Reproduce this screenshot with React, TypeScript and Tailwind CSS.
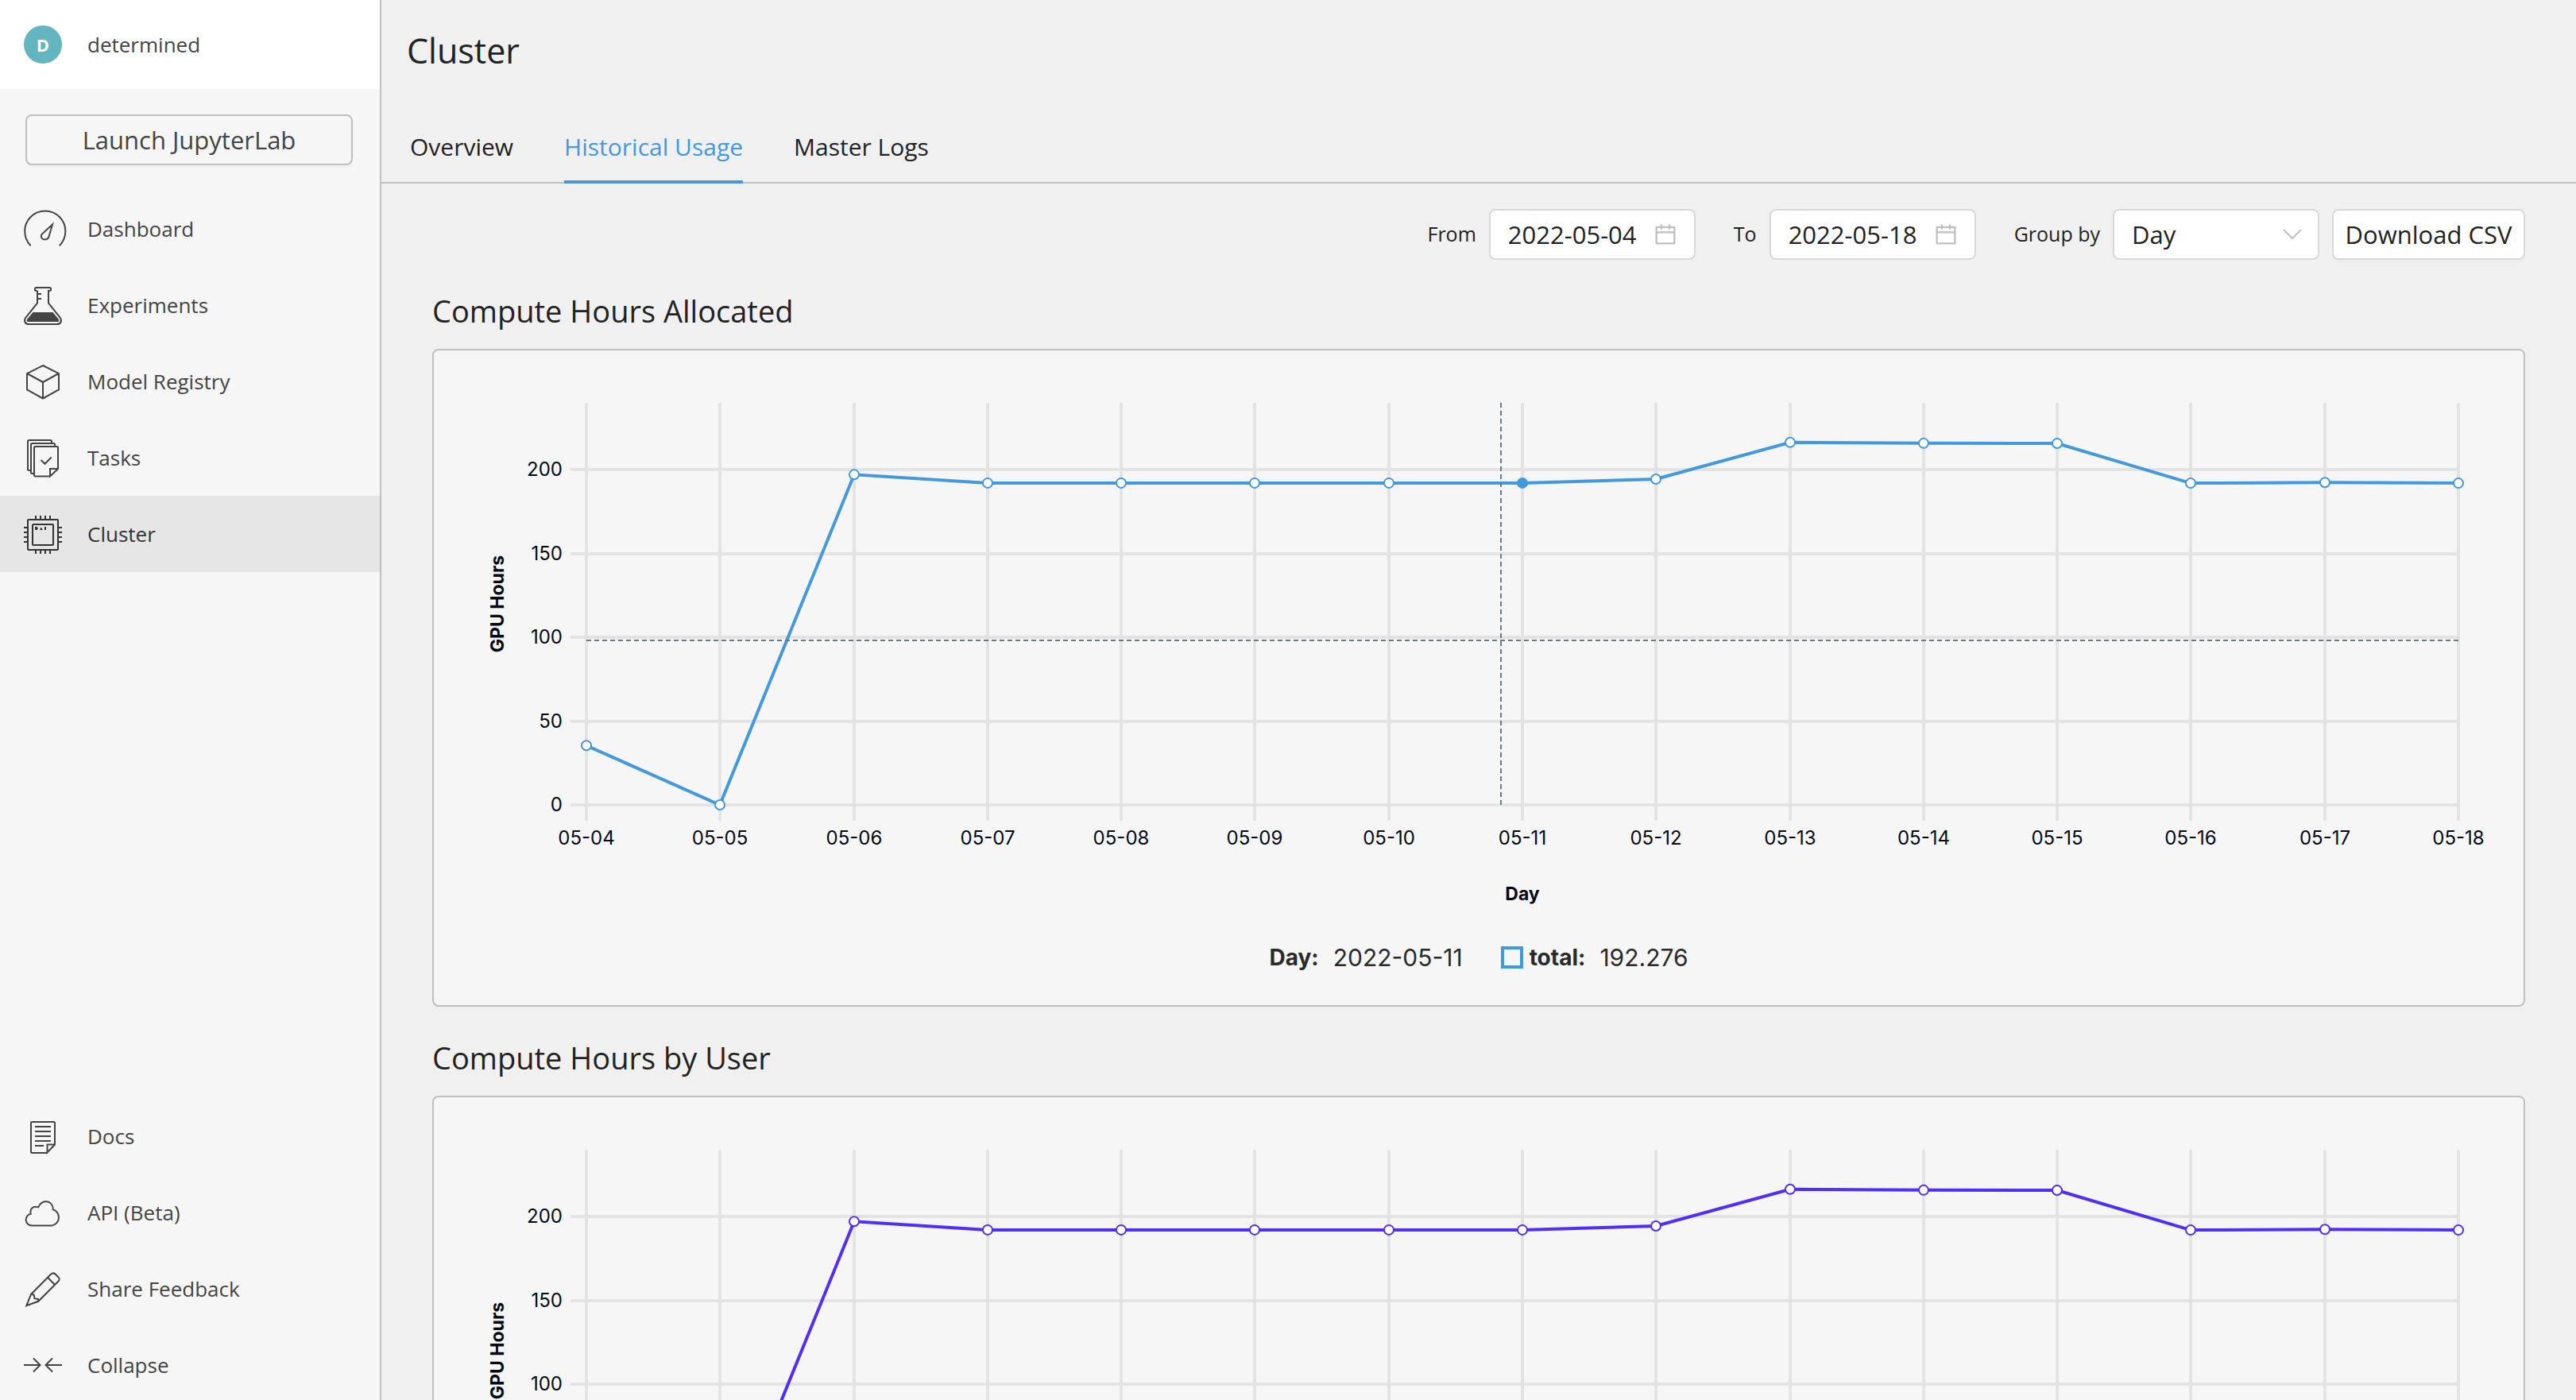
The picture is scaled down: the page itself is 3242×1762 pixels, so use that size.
import { useLayoutEffect, useRef, useState } from "react";
import type { ReactNode } from "react";
import { AiOutlineCalendar } from "react-icons/ai";

function Icon({ children }: { children: ReactNode }) {
  return (
    <svg
      viewBox="0 0 48 48"
      className="size-12 shrink-0 overflow-visible"
      fill="none"
      stroke="currentColor"
      strokeWidth="2"
      aria-hidden="true"
    >
      {children}
    </svg>
  );
}

const DashboardIcon = () => (
  <Icon>
    <path d="M8.7 45.2A25.6 25.6 0 1 1 44.8 45.2" />
    <path d="M36 18.500 22.600 30.800C20.600 34 22.600 37.400 26.400 37.400C29.600 37.400 31.400 35.600 32 32Z" />
  </Icon>
);

const ExperimentsIcon = () => (
  <Icon>
    <path d="M17 6h-1.500a1.500 1.500 0 0 1-1.500-1.500V3.500a1.500 1.500 0 0 1 1.500-1.500h17a1.500 1.500 0 0 1 1.500 1.500v1a1.500 1.500 0 0 1-1.500 1.500H31V21.500L45.500 39.500C48.500 43.500 46.500 48 42 48H6C1.500 48-.5 43.500 2.500 39.500L17 21.500V6M17 10h5M17 16h5" />
    <path
      d="M11.500 33h25L43.600 41.500C45 43.500 44 45 42 45H6C4 45 3 43.500 4.400 41.500Z"
      fill="currentColor"
      stroke="none"
    />
  </Icon>
);

const ModelIcon = () => (
  <Icon>
    <path d="M24 4 44 14V34.500L24 45.500 4 34.500V14ZM4 14 24 25 44 14M24 25V45.500" />
  </Icon>
);

const TasksIcon = () => (
  <Icon>
    <path d="M8 40H6.500A1.500 1.500 0 0 1 5 38.500V3.500A1.500 1.500 0 0 1 6.500 2H33.500A1.500 1.500 0 0 1 35 3.500V6" />
    <path d="M12 44H10.500A1.500 1.500 0 0 1 9 42.500V7.500A1.500 1.500 0 0 1 10.500 6H37.500A1.500 1.500 0 0 1 39 7.500V10" />
    <path d="M33 47.500H14.500A1.500 1.500 0 0 1 13 46V11.500A1.500 1.500 0 0 1 14.500 10H41.500A1.500 1.500 0 0 1 43 11.500V38L33 47.500V38H43" />
    <path d="M21.500 27 26.500 31.800 34.700 23.500" />
  </Icon>
);

const ClusterIcon = () => (
  <Icon>
    <rect x="5" y="6" width="38" height="38" rx="1" />
    <rect x="11" y="12" width="26" height="26" rx="1" />
    <path d="M15 1v5M21 1v5M27 1v5M33 1v5M15 44v5M21 44v5M27 44v5M33 44v5M0 16h5M0 22h5M0 28h5M0 34h5M43 16h5M43 22h5M43 28h5M43 34h5" />
    <path
      d="M14 15h2.500L18 17 16.500 19H14ZM21.500 15.500 24 19H20ZM26 15h2v4h-2Z"
      fill="currentColor"
      stroke="none"
    />
  </Icon>
);

const DocsIcon = () => (
  <Icon>
    <path d="M30 45H10.500A1.500 1.500 0 0 1 9 43.500V7.500A1.500 1.500 0 0 1 10.500 6H37.500A1.500 1.500 0 0 1 39 7.500V34.500L29.500 44.500V34.500H39" />
    <path d="M14 12h20M14 18h20M14 24h20M14 30h20M14 36h11" />
  </Icon>
);

const ApiIcon = () => (
  <Icon>
    <path d="M10 40.500A7.400 7.400 0 0 1 8.800 25.800C7 19.500 12 15 18.300 17.300C22 6.500 37 8.500 36.800 20.300A10.400 10.400 0 0 1 35 40.500Z" />
  </Icon>
);

const FeedbackIcon = () => (
  <Icon>
    <path d="M9 31 34 5.800C36 4 38 4 39.500 5.500L43.500 9.500C45 11 45 13 43.300 14.700L18.300 39.800 3.300 45.300Z" />
    <path d="M30.300 10 38.800 18.700M9 31l3.600.5.900 4.700 4.500.8.300 2.800" />
  </Icon>
);

const CollapseIcon = () => (
  <Icon>
    <path d="M0 24H20.500M12 15.500 20.500 24 12 32.500M48 24H27.500M36 15.500 27.500 24 36 32.500" />
  </Icon>
);

function NavItem({ icon, label, active }: { icon: ReactNode; label: string; active?: boolean }) {
  return (
    <a
      href="#"
      aria-current={active ? "page" : undefined}
      className={
        active
          ? "flex h-24 items-center gap-8 bg-[#e6e6e6] pl-[30px] text-[26px] text-[#333333]"
          : "flex h-24 items-center gap-8 pl-[30px] text-[26px] text-[#444444]"
      }
    >
      {icon}
      <span>{label}</span>
    </a>
  );
}

function Sidebar() {
  return (
    <aside className="flex w-[480px] shrink-0 flex-col border-r-2 border-[#bfbfbf] bg-[#f6f6f6] text-[#444444]">
      <div className="flex h-28 shrink-0 items-center gap-8 bg-white pl-[30px] text-[26px]">
        <span className="flex size-12 items-center justify-center rounded-full bg-[#63b5c0] text-[22px] font-bold text-white">
          D
        </span>
        <span>determined</span>
      </div>
      <div className="py-8 pr-[34px] pl-8">
        <button className="h-16 w-full rounded-lg border-2 border-[#bfbfbf] text-[31px] leading-[56px] shadow-[0_4px_0_rgba(0,0,0,0.015)]">
          Launch JupyterLab
        </button>
      </div>
      <nav>
        <NavItem icon={<DashboardIcon />} label="Dashboard" />
        <NavItem icon={<ExperimentsIcon />} label="Experiments" />
        <NavItem icon={<ModelIcon />} label="Model Registry" />
        <NavItem icon={<TasksIcon />} label="Tasks" />
        <NavItem icon={<ClusterIcon />} label="Cluster" active />
      </nav>
      <nav className="mt-auto -mb-1">
        <NavItem icon={<DocsIcon />} label="Docs" />
        <NavItem icon={<ApiIcon />} label="API (Beta)" />
        <NavItem icon={<FeedbackIcon />} label="Share Feedback" />
        <button className="flex h-24 w-full items-center gap-8 pl-[30px] text-[26px]">
          <CollapseIcon />
          <span>Collapse</span>
        </button>
      </nav>
    </aside>
  );
}

const HOURS = [
  { day: "05-04", hours: 35.4 },
  { day: "05-05", hours: 0 },
  { day: "05-06", hours: 197 },
  { day: "05-07", hours: 192 },
  { day: "05-08", hours: 192 },
  { day: "05-09", hours: 192 },
  { day: "05-10", hours: 192 },
  { day: "05-11", hours: 192 },
  { day: "05-12", hours: 194.3 },
  { day: "05-13", hours: 216.2 },
  { day: "05-14", hours: 215.7 },
  { day: "05-15", hours: 215.6 },
  { day: "05-16", hours: 191.9 },
  { day: "05-17", hours: 192.3 },
  { day: "05-18", hours: 191.9 },
];

const LEFT = 192;
const RIGHT = 82;
const TOP = 66;
const BASE = 572;
const UNIT = 2.11;

function Chart({ color, cursor }: { color: string; cursor?: { x: number; y: number; index: number } }) {
  const ref = useRef<SVGSVGElement>(null);
  const [width, setWidth] = useState(2630);

  useLayoutEffect(() => {
    const el = ref.current;
    if (!el) return;
    const update = () => setWidth(el.getBoundingClientRect().width);
    update();
    const observer = new ResizeObserver(update);
    observer.observe(el);
    return () => observer.disconnect();
  }, []);

  const span = width - LEFT - RIGHT;
  const end = LEFT + span;
  const px = (i: number) => Math.round(LEFT + (span * i) / (HOURS.length - 1));
  const py = (v: number) => BASE - v * UNIT;

  return (
    <svg ref={ref} className="block h-[720px] w-full font-['Inter',sans-serif] text-[24px]">
      <g stroke="#e3e3e3" strokeWidth="4">
        {HOURS.map((d, i) => (
          <line key={d.day} x1={px(i)} x2={px(i)} y1={TOP} y2={BASE + 20} />
        ))}
        {[0, 50, 100, 150, 200].map((v) => (
          <line key={v} x1={LEFT - 20} x2={end} y1={Math.round(py(v))} y2={Math.round(py(v))} />
        ))}
      </g>
      <g fill="#000814">
        {HOURS.map((d, i) => (
          <text key={d.day} x={px(i)} y={BASE + 50} textAnchor="middle">
            {d.day}
          </text>
        ))}
        {[0, 50, 100, 150, 200].map((v) => (
          <text key={v} x={LEFT - 30} y={Math.round(py(v)) + 8} textAnchor="end">
            {v}
          </text>
        ))}
        <text x={LEFT + span / 2} y={BASE + 120} textAnchor="middle" className="text-[23px] font-bold">
          Day
        </text>
        <text
          transform={`translate(88 ${(TOP + BASE) / 2}) rotate(-90)`}
          textAnchor="middle"
          className="text-[23px] font-bold"
        >
          GPU Hours
        </text>
      </g>
      <polyline
        points={HOURS.map((d, i) => `${px(i)},${py(d.hours)}`).join(" ")}
        fill="none"
        stroke={color}
        strokeWidth="4"
      />
      {HOURS.map((d, i) => (
        <circle
          key={d.day}
          cx={px(i)}
          cy={py(d.hours)}
          r="6"
          fill={cursor?.index === i ? color : "#ffffff"}
          stroke={color}
          strokeWidth="2"
        />
      ))}
      {cursor && (
        <g stroke="#667b88" strokeWidth="2" strokeDasharray="6 4">
          <line
            x1={Math.round(LEFT + span * cursor.x)}
            x2={Math.round(LEFT + span * cursor.x)}
            y1={TOP}
            y2={BASE}
          />
          <line x1={LEFT} x2={end} y1={cursor.y} y2={cursor.y} />
        </g>
      )}
    </svg>
  );
}

function Section({ title, children }: { title: string; children: ReactNode }) {
  return (
    <section>
      <h2 className="pt-10 pb-6 text-[38px] leading-[48px]">{title}</h2>
      <div className="rounded-lg border-2 border-[#bfbfbf] bg-[#f6f6f6]">{children}</div>
    </section>
  );
}

function Legend({ label, color, day, value }: { label: string; color: string; day: string; value: string }) {
  return (
    <dl className="flex items-center justify-center pt-6 pb-10 font-['Inter',sans-serif] text-[28px] leading-10 text-[#2a2a2a]">
      <dt className="mr-[18px] font-bold">Day:</dt>
      <dd className="mr-12 text-[30px]">{day}</dd>
      <dt className="mr-[18px] flex items-center gap-2 font-bold">
        <span className="size-7 border-4" style={{ borderColor: color }} />
        {label}
      </dt>
      <dd className="text-[30px]">{value}</dd>
    </dl>
  );
}

function DateField({ label, id, value }: { label: string; id: string; value: string }) {
  return (
    <div className="flex items-center gap-4">
      <label htmlFor={id}>{label}</label>
      <div className="flex h-16 w-[260px] items-center rounded-lg border-2 border-[#d9d9d9] bg-white pr-5 pl-[22px]">
        <input id={id} defaultValue={value} className="w-full min-w-0 text-[31px] leading-[56px] outline-none" />
        <AiOutlineCalendar className="size-8 shrink-0 text-[#bfbfbf]" />
      </div>
    </div>
  );
}

function Filters() {
  return (
    <div className="flex items-center justify-end gap-12 text-[25px]">
      <DateField label="From" id="from" value="2022-05-04" />
      <DateField label="To" id="to" value="2022-05-18" />
      <div className="flex items-center gap-4">
        <label htmlFor="group">Group by</label>
        <div className="relative">
          <select
            id="group"
            className="h-16 w-[260px] appearance-none rounded-lg border-2 border-[#d9d9d9] bg-white pl-[22px] text-[31px] outline-none"
          >
            <option>Day</option>
            <option>Month</option>
          </select>
          <svg
            viewBox="0 0 24 12"
            className="pointer-events-none absolute top-[26px] right-[22px] h-3 w-6"
            fill="none"
            stroke="#bfbfbf"
            strokeWidth="2"
            aria-hidden="true"
          >
            <path d="M1 0 12 11 23 0" />
          </svg>
        </div>
        <button className="h-16 w-[243px] rounded-lg border-2 border-[#d9d9d9] bg-white text-[31px] leading-[56px] shadow-[0_4px_0_rgba(0,0,0,0.015)]">
          Download CSV
        </button>
      </div>
    </div>
  );
}

const TAB = "-mb-0.5 border-b-4 border-transparent pb-5";
const TAB_ACTIVE = "-mb-0.5 border-b-4 border-[#4499dd] pb-5 text-[#4499dd]";

export default function App() {
  return (
    <div className="flex h-screen overflow-hidden bg-[#f0f0f0] font-['Open_Sans',sans-serif] text-[#222222]">
      <Sidebar />
      <main className="min-w-0 flex-1 overflow-y-auto [scrollbar-width:none]">
        <h1 className="pt-[34px] pl-8 text-[43px] leading-[60px]">Cluster</h1>
        <div role="tablist" className="mt-[69px] flex gap-16 border-b-2 border-[#bfbfbf] pl-9 text-[30px] leading-[44px]">
          <button role="tab" className={TAB}>
            Overview
          </button>
          <button role="tab" aria-selected="true" className={TAB_ACTIVE}>
            Historical Usage
          </button>
          <button role="tab" className={TAB}>
            Master Logs
          </button>
        </div>
        <div className="px-16 pt-8 pb-16">
          <Filters />
          <Section title="Compute Hours Allocated">
            <Chart color="#4499dd" cursor={{ x: 0.4885, y: 365, index: 7 }} />
            <Legend label="total:" color="#4499dd" day="2022-05-11" value="192.276" />
          </Section>
          <Section title="Compute Hours by User">
            <Chart color="#522cf7" />
            <Legend label="determined:" color="#522cf7" day="2022-05-11" value="192.276" />
          </Section>
        </div>
      </main>
    </div>
  );
}
